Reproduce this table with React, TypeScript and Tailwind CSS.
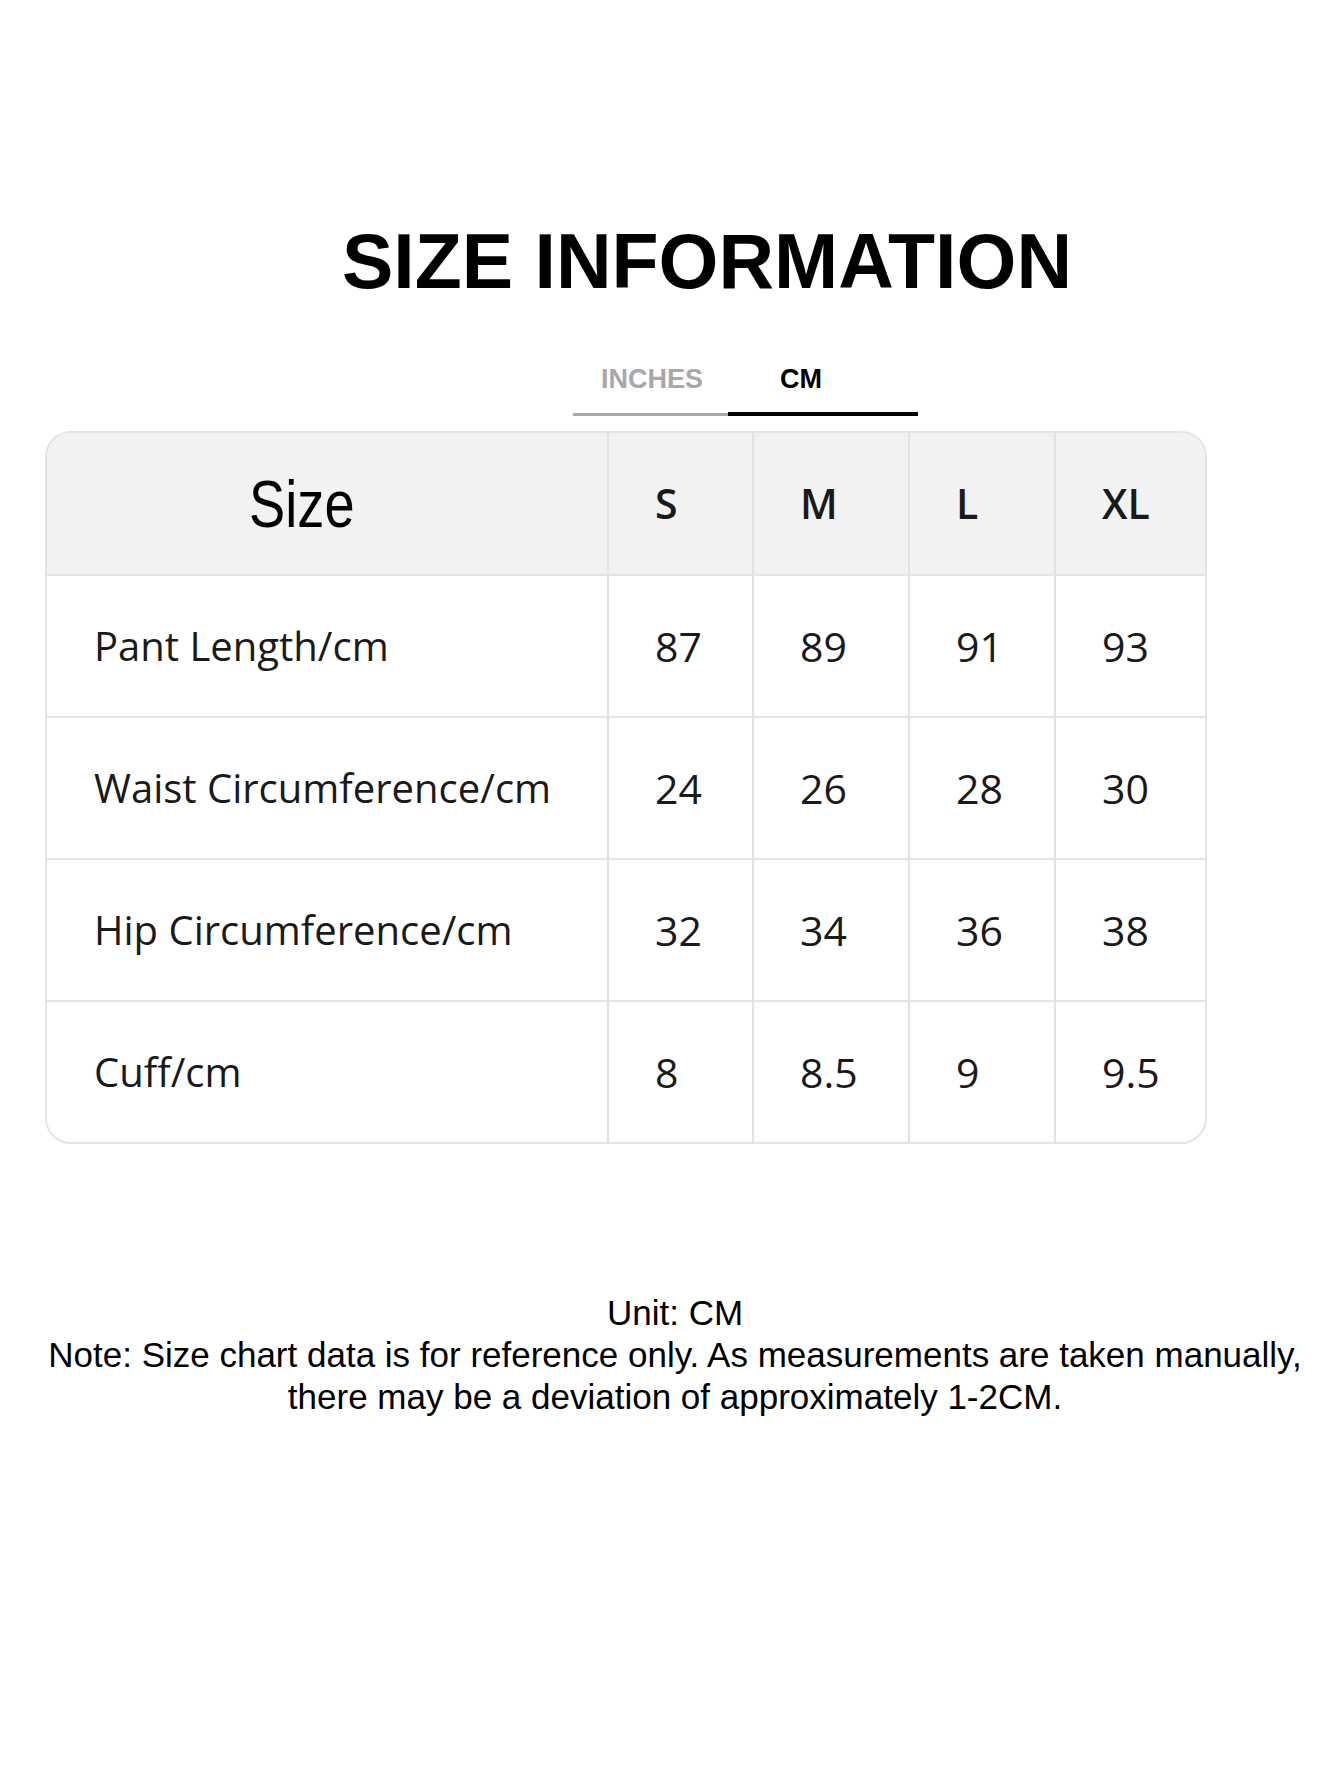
import React from "react";

const rows: { label: string; values: string[] }[] = [
  { label: "Pant Length/cm", values: ["87", "89", "91", "93"] },
  { label: "Waist Circumference/cm", values: ["24", "26", "28", "30"] },
  { label: "Hip Circumference/cm", values: ["32", "34", "36", "38"] },
  { label: "Cuff/cm", values: ["8", "8.5", "9", "9.5"] },
];

const sizes = ["S", "M", "L", "XL"];

export default function App() {
  return (
    <div className="w-[1340px] h-[1785px] bg-white relative overflow-hidden">
      {/* Title */}
      <div className="pt-[223px] flex justify-center pl-[74px]">
        <h1 className="font-['Liberation_Sans',Arial,sans-serif] font-bold text-[77px] leading-none text-black">
          SIZE INFORMATION
        </h1>
      </div>

      {/* Tabs */}
      <div className="mt-[66px] flex items-end pl-[573px]">
        <div className="w-[155px] flex flex-col">
          <div className="pl-[28px] font-['Liberation_Sans',Arial,sans-serif] font-bold text-[27px] leading-none text-[#a8a8a8]">
            INCHES
          </div>
          <div className="mt-[20px] h-[3px] bg-[#a8a8a8]" />
        </div>
        <div className="w-[190px] flex flex-col">
          <div className="pl-[52px] font-['Liberation_Sans',Arial,sans-serif] font-bold text-[27px] leading-none text-black">
            CM
          </div>
          <div className="mt-[19px] h-[4px] bg-black" />
        </div>
      </div>

      {/* Table */}
      <div className="mt-[15px] ml-[45px] w-[1162px] border-2 border-[#e3e3e3] rounded-[26px] overflow-hidden font-['Open_Sans','Noto_Sans',sans-serif] text-[#1a1a1a]">
        <div className="grid grid-cols-[560px_145px_156px_146px_151px] h-[141px] bg-[#f2f2f2]">
          <div className="flex items-center pl-[202px]">
            <span className="inline-block origin-left scale-x-[0.81] font-['Liberation_Sans',Arial,sans-serif] text-[67px] leading-none text-black">
              Size
            </span>
          </div>
          {sizes.map((s) => (
            <div
              key={s}
              className="border-l-2 border-[#e3e3e3] flex items-center pl-[46px] text-[41px] font-semibold leading-none"
            >
              {s}
            </div>
          ))}
        </div>
        {rows.map((r) => (
          <div
            key={r.label}
            className="grid grid-cols-[560px_145px_156px_146px_151px] h-[142px] border-t-2 border-[#e3e3e3] bg-white"
          >
            <div className="flex items-center pl-[47px] text-[40px] leading-none">
              {r.label}
            </div>
            {r.values.map((v, i) => (
              <div
                key={i}
                className="border-l-2 border-[#e3e3e3] flex items-center pl-[46px] text-[41px] leading-none"
              >
                {v}
              </div>
            ))}
          </div>
        ))}
      </div>

      {/* Notes */}
      <div className="mt-[148px] pl-[10px] text-center font-['Liberation_Sans',Arial,sans-serif] text-[35px] leading-[42px] text-black">
        <div>Unit: CM</div>
        <div className="whitespace-nowrap">
          Note: Size chart data is for reference only. As measurements are taken manually,
        </div>
        <div>there may be a deviation of approximately 1-2CM.</div>
      </div>
    </div>
  );
}
